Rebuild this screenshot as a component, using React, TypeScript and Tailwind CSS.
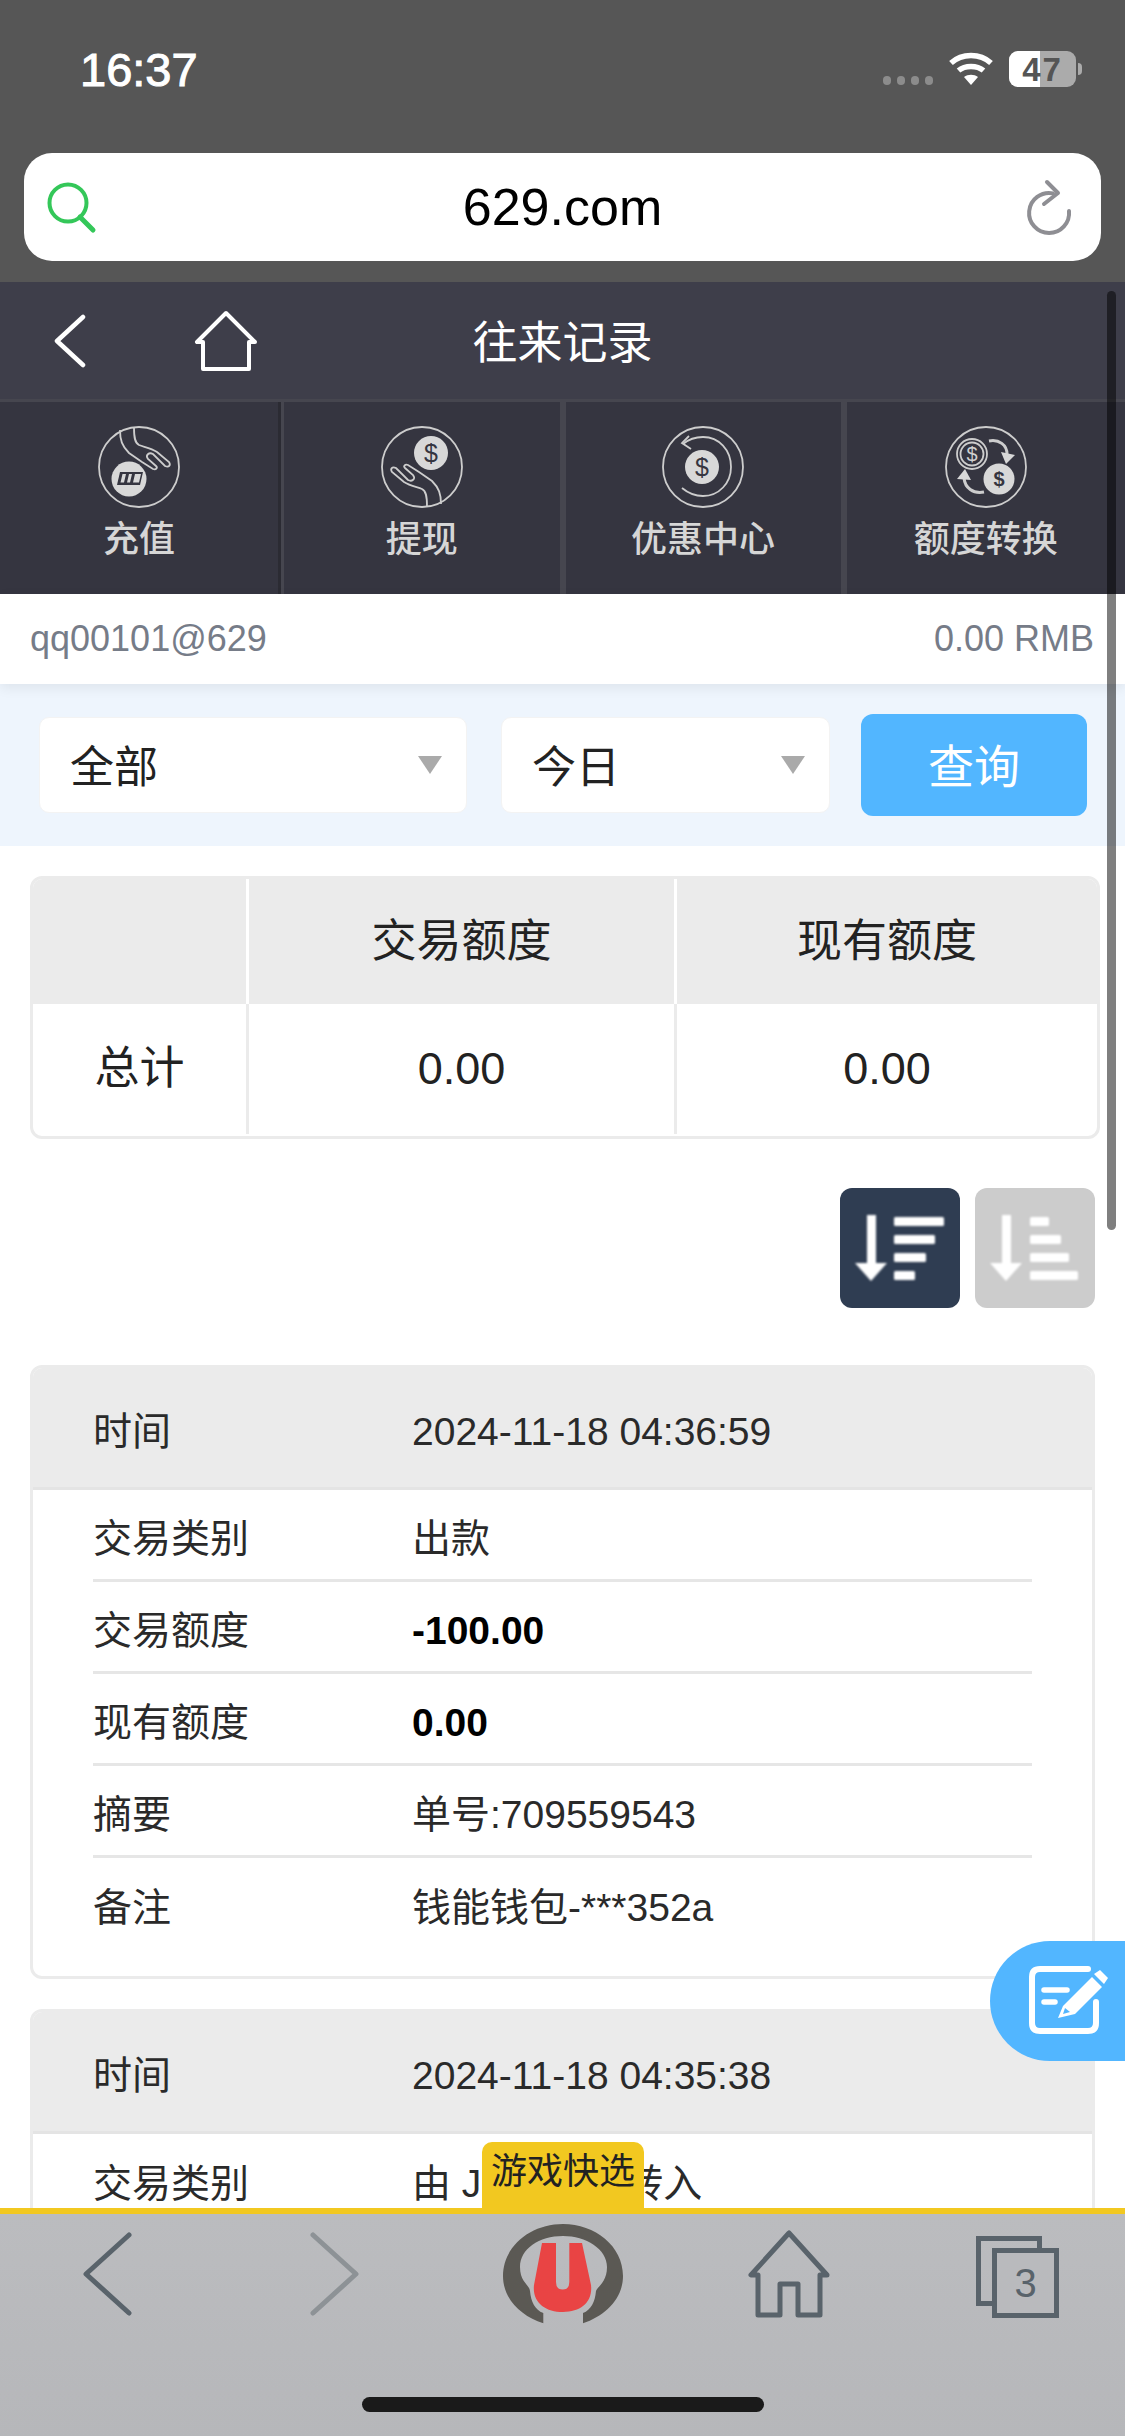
import React from 'react';

const IconRing = ({ children }: { children: React.ReactNode }) => (
  <svg width="82" height="82" viewBox="0 0 82 82" fill="none" stroke="#cdcdcd" strokeWidth="1.8">
    <circle cx="41" cy="41" r="40" />
    {children}
  </svg>
);

const handPath = (
  <path d="M22 4 C22 14 24 20 31 27 L44 36 L55 43 C58 44 60 42 58 40 L50 33 C47 29 51 26 55 28 L67 40 C71 42 73 39 71 36 L59 26 C53 22 46 21 41 19 C37 17 36 12 36 2" />
);

const DepositIcon = () => (
  <IconRing>
    {handPath}
    <circle cx="31" cy="53" r="17.5" fill="#d8d8d8" stroke="none" />
    <path d="M22 46 H45 L42 59 H19 Z" fill="#353540" stroke="none" />
    <path d="M24.5 48 H28 L26 56.5 H22.5 Z M31 48 H34 L32 56.5 H29 Z M37 48 H43 L41 56.5 H35 Z" fill="#d8d8d8" stroke="none" />
  </IconRing>
);

const WithdrawIcon = () => (
  <IconRing>
    <g transform="rotate(180 41 41)">{handPath}</g>
    <circle cx="50" cy="27" r="17" fill="#d8d8d8" stroke="none" />
    <text x="50" y="36" textAnchor="middle" fontSize="25" fill="#353540" stroke="none" fontFamily="Liberation Sans">$</text>
  </IconRing>
);

const PromoIcon = () => (
  <IconRing>
    <path d="M21 18 C27 13 33 11 41 11 C57 11 69 24 69 41 C69 57 57 70 41 70 C33 70 26 67 20 62" />
    <path d="M27 10 L20 17 L29 23" />
    <circle cx="40" cy="41" r="17" fill="#d8d8d8" stroke="none" />
    <text x="40" y="50" textAnchor="middle" fontSize="25" fill="#353540" stroke="none" fontFamily="Liberation Sans">$</text>
  </IconRing>
);

const TransferIcon = () => (
  <IconRing>
    <circle cx="27" cy="28" r="15" />
    <circle cx="27" cy="28" r="11.5" />
    <text x="27" y="35" textAnchor="middle" fontSize="20" fill="#d0d0d0" stroke="none" fontFamily="Liberation Sans">$</text>
    <circle cx="54" cy="53" r="15.5" fill="#d8d8d8" stroke="none" />
    <text x="54" y="60" textAnchor="middle" fontSize="20" fontWeight="700" fill="#353540" stroke="none" fontFamily="Liberation Sans">$</text>
    <path d="M44 15 C54 13 62 19 62 28" strokeWidth="3" />
    <path d="M56 26 L70 29 L61 38 Z" fill="#d8d8d8" stroke="none" />
    <path d="M39 66 C28 68 20 62 19 52" strokeWidth="3" />
    <path d="M12 53 L20 43 L26 54 Z" fill="#d8d8d8" stroke="none" />
  </IconRing>
);

const tabs = [
  { label: '充值', icon: <DepositIcon /> },
  { label: '提现', icon: <WithdrawIcon /> },
  { label: '优惠中心', icon: <PromoIcon /> },
  { label: '额度转换', icon: <TransferIcon /> },
];

const StatusBar = () => (
  <div className="h-[138px] flex items-center justify-between pl-[80px] pr-[43px]">
    <span className="text-[47px] text-white leading-none [-webkit-text-stroke:1px_white]">16:37</span>
    <div className="flex items-center">
      <div className="flex gap-[6px] mt-[23px] mr-[15px]">
        <span className="w-[8px] h-[9px] rounded-full bg-[#8c8c8c]" />
        <span className="w-[8px] h-[9px] rounded-full bg-[#8c8c8c]" />
        <span className="w-[8px] h-[9px] rounded-full bg-[#8c8c8c]" />
        <span className="w-[8px] h-[9px] rounded-full bg-[#8c8c8c]" />
      </div>
      <svg width="46" height="34" viewBox="0 0 46 34" fill="none" stroke="white" strokeWidth="5.5" className="mr-[15px]">
        <path d="M3 11 C14 1 32 1 43 11" />
        <path d="M10.5 18.5 C17 13 29 13 35.5 18.5" />
        <path d="M23 33 L16 25 C20 22 26 22 30 25 Z" fill="white" stroke="none" />
      </svg>
      <div className="relative w-[67px] h-[36px] rounded-[9px] bg-[#ababab] overflow-hidden">
        <div className="w-[31px] h-full bg-white" />
        <span className="absolute inset-0 flex items-center justify-center text-[33px] font-bold tracking-[2px] text-[#555] leading-none">47</span>
      </div>
      <div className="w-[4px] h-[12px] ml-[2px] rounded-r-full bg-[#ababab]" />
    </div>
  </div>
);

const UrlBar = () => (
  <div className="mt-[15px] mx-[24px] h-[108px] rounded-[28px] bg-white flex items-center justify-between px-[16px]">
    <svg width="60" height="60" viewBox="0 0 60 60" fill="none" stroke="#34c759" strokeWidth="4" strokeLinecap="round">
      <circle cx="28" cy="26" r="18.5" />
      <path d="M40 40 L53 53" strokeWidth="5" />
    </svg>
    <span className="text-[52px] text-black leading-none">629.com</span>
    <svg width="60" height="60" viewBox="0 0 60 60" fill="none" stroke="#8e8e93" strokeWidth="4" strokeLinecap="round" strokeLinejoin="round">
      <path d="M28 16.4 A20 20 0 1 0 44 34" />
      <path d="M22 5 L33 16 L19 27" />
    </svg>
  </div>
);

const PageHeader = () => (
  <div className="h-[120px] bg-[#3e3e4a] border-b-[3px] border-[#46464f] flex items-center text-white">
    <div className="w-[300px] flex items-center pl-[54px]">
      <svg width="32" height="54" viewBox="0 0 32 54" fill="none" stroke="white" strokeWidth="4.5" strokeLinecap="round" strokeLinejoin="round">
        <path d="M29 3 L3 27 L29 51" />
      </svg>
      <svg width="64" height="62" viewBox="0 0 64 62" fill="none" stroke="white" strokeWidth="4" strokeLinejoin="round" className="ml-[108px]">
        <path d="M32 3 L3 32 H9 V59 H55 V32 H61 Z" />
      </svg>
    </div>
    <div className="flex-1 pt-[5px] text-center text-[45px] leading-none">往来记录</div>
    <div className="w-[300px]" />
  </div>
);

const QuickTabs = () => (
  <div className="h-[192px] bg-[#353540] grid grid-cols-4">
    {tabs.map((tab, i) => (
      <div
        key={tab.label}
        className={`flex flex-col items-center pt-[24px] ${i < 3 ? 'border-r-[3px] border-[#2b2b33]' : ''} ${i > 0 ? 'border-l-[3px] border-[#46464f]' : ''}`}
      >
        {tab.icon}
        <span className="mt-[10px] text-[36px] leading-[44px] font-medium text-[#d6d6d6]">{tab.label}</span>
      </div>
    ))}
  </div>
);

const AccountRow = () => (
  <div className="relative h-[90px] bg-white flex items-center justify-between pl-[30px] pr-[31px] text-[36px] text-[#767c88] shadow-[0_4px_12px_rgba(0,0,0,0.07)]">
    <span>qq00101@629</span>
    <span>0.00 RMB</span>
  </div>
);

const SelectBox = ({ label, width }: { label: string; width: string }) => (
  <div className={`${width} h-[96px] rounded-[10px] bg-white border border-[#f3f3f3] flex items-center justify-between pl-[30px] pr-[24px]`}>
    <span className="pt-[5px] text-[44px] text-[#222] leading-none">{label}</span>
    <svg width="24" height="18" viewBox="0 0 24 18">
      <path d="M0 0 H24 L12 18 Z" fill="#aaaaaa" />
    </svg>
  </div>
);

const FilterBar = () => (
  <div className="h-[162px] bg-[#eef5fd] flex items-center pl-[39px]">
    <SelectBox label="全部" width="w-[428px]" />
    <div className="w-[34px]" />
    <SelectBox label="今日" width="w-[329px]" />
    <button className="ml-[31px] w-[226px] h-[102px] pt-[4px] rounded-[12px] bg-[#52b6ff] text-white text-[46px]">查询</button>
  </div>
);

const SummaryTable = () => (
  <div className="mt-[30px] ml-[30px] w-[1070px] h-[263px] rounded-[12px] border-[3px] border-[#ebebeb] overflow-hidden text-[45px] text-[#222]">
    <div className="h-[125px] bg-[#ebebeb] grid grid-cols-[216px_428px_1fr]">
      <div className="border-r-[3px] border-white" />
      <div className="border-r-[3px] border-white flex items-center justify-center">交易额度</div>
      <div className="flex items-center justify-center">现有额度</div>
    </div>
    <div className="h-[132px] pb-[2px] grid grid-cols-[216px_428px_1fr]">
      <div className="border-r-[3px] border-[#ebebeb] flex items-center justify-center">总计</div>
      <div className="border-r-[3px] border-[#ebebeb] flex items-center justify-center">0.00</div>
      <div className="flex items-center justify-center">0.00</div>
    </div>
  </div>
);

const SortButtons = () => (
  <div className="mt-[49px] pr-[30px] flex justify-end gap-[15px]">
    <svg width="120" height="120" viewBox="0 0 120 120" className="rounded-[12px] bg-[#2f3d52]" fill="white">
      <g className="blur-[0.8px]">
        <rect x="27" y="27" width="9" height="50" />
        <path d="M15 75 H47 L31 93 Z" />
        <rect x="54" y="29" width="50" height="9" rx="1.5" />
        <rect x="54" y="47" width="41" height="9" rx="1.5" />
        <rect x="54" y="65" width="32" height="9" rx="1.5" />
        <rect x="54" y="83" width="21" height="9" rx="1.5" />
      </g>
    </svg>
    <svg width="120" height="120" viewBox="0 0 120 120" className="rounded-[12px] bg-[#cccccc]" fill="white">
      <g className="blur-[0.8px]">
        <rect x="27" y="27" width="9" height="50" />
        <path d="M15 75 H47 L31 93 Z" />
        <rect x="55" y="29" width="19" height="9" rx="1.5" />
        <rect x="55" y="47" width="31" height="9" rx="1.5" />
        <rect x="55" y="65" width="39" height="9" rx="1.5" />
        <rect x="55" y="83" width="48" height="9" rx="1.5" />
      </g>
    </svg>
  </div>
);

type Row = { label: string; value: string; bold?: boolean };

const RecordCard = ({ time, rows }: { time: string; rows: Row[] }) => (
  <div className="ml-[30px] w-[1065px] rounded-[12px] border-[3px] border-[#ebebeb] text-[39px] text-[#2a2a2a] overflow-hidden">
    <div className="h-[122px] pt-[9px] bg-[#ebebeb] border-b-[3px] border-[#e4e4e4] flex items-center pl-[60px]">
      <span className="w-[319px]">时间</span>
      <span>{time}</span>
    </div>
    <div className="pl-[60px] pr-[60px] pb-[26px]">
      {rows.map((row, i) => (
        <div key={row.label} className={`h-[92px] pt-[9px] flex items-center ${i < rows.length - 1 ? 'border-b-[3px] border-[#e6e6e6]' : ''}`}>
          <span className="w-[319px]">{row.label}</span>
          <span className={row.bold ? 'font-bold text-black' : ''}>{row.value}</span>
        </div>
      ))}
    </div>
  </div>
);

const BottomBar = () => (
  <div className="h-[228px] border-t-[6px] border-[#f2c820] bg-gradient-to-b from-[#bbbcbf] to-[#b6b7ba]">
    <div className="flex h-[125px] pt-[18px] pl-[83px] items-start">
      <svg width="50" height="84" viewBox="0 0 50 84" fill="none" stroke="#59636b" strokeWidth="5" strokeLinecap="round" strokeLinejoin="round">
        <path d="M46 3 L3 42 L46 81" />
      </svg>
      <svg width="50" height="84" viewBox="0 0 50 84" fill="none" stroke="#8d9296" strokeWidth="5" strokeLinecap="round" strokeLinejoin="round" className="ml-[176px]">
        <path d="M4 3 L47 42 L4 81" />
      </svg>
      <svg width="124" height="100" viewBox="0 0 124 100" className="ml-[142px] mt-[-8px]">
        <path fill="#5b5954" d="M42.3 99.3 C20 92 2 75 2 52 C2 22 30 0 62 0 C94 0 122 22 122 52 C122 75 104 92 82 99.3 V89 C90 86 94 78 95 67 C97 62 106 58 106 43 C106 25 85 12 62 12 C38 12 19 25 19 43 C19 58 28 60 29 67 C30 78 34 86 42.3 89 Z" />
        <path fill="#e94444" d="M41 19 H55 V58 Q55 65.5 61.7 65.5 Q68.3 65.5 68.3 58 V19 H81 L90 61 C92 78 80 88 62 88 C44 88 31 78 33 61 Z" />
      </svg>
      <svg width="88" height="88" viewBox="0 0 88 88" fill="none" stroke="#59636b" strokeWidth="5" strokeLinejoin="round" className="ml-[120px] mt-[-2px]">
        <path d="M44 3 L6 45 H13 V85 H35 V54 H53 V85 H75 V45 H82 Z" />
      </svg>
      <div className="relative ml-[143px] mt-[4px] w-[84px] h-[84px]">
        <div className="absolute left-0 top-0 w-[66px] h-[70px] border-[5px] border-[#59636b]" />
        <div className="absolute left-[16px] top-[12px] w-[67px] h-[70px] border-[5px] border-[#59636b] bg-[#b9babd] flex items-center justify-center text-[40px] text-[#59636b]">3</div>
      </div>
    </div>
    <div className="mt-[58px] mx-auto w-[402px] h-[15px] rounded-full bg-[#1a1a1a]" />
  </div>
);

export default function App() {
  return (
    <div className="relative w-[1125px] h-[2436px] overflow-hidden bg-white flex flex-col font-['Liberation_Sans','Noto_Sans_CJK_SC',sans-serif]">
      <div className="h-[282px] shrink-0 bg-[#565656]">
        <StatusBar />
        <UrlBar />
      </div>

      <div className="relative flex-1 overflow-hidden">
        <PageHeader />
        <QuickTabs />
        <AccountRow />
        <FilterBar />
        <SummaryTable />
        <SortButtons />
        <div className="mt-[57px] flex flex-col gap-[30px]">
          <RecordCard
            time="2024-11-18 04:36:59"
            rows={[
              { label: '交易类别', value: '出款' },
              { label: '交易额度', value: '-100.00', bold: true },
              { label: '现有额度', value: '0.00', bold: true },
              { label: '摘要', value: '单号:709559543' },
              { label: '备注', value: '钱能钱包-***352a' },
            ]}
          />
          <RecordCard
            time="2024-11-18 04:35:38"
            rows={[{ label: '交易类别', value: '由 JDB棋牌 转入' }]}
          />
        </div>

        {/* scrollbar */}
        <div className="absolute top-[9px] right-[9px] w-[9px] h-[939px] rounded-full bg-black/50" />

        {/* floating note button */}
        <div className="absolute top-[1659px] right-0 w-[135px] h-[120px] rounded-l-[60px] bg-[#52b6ff] pl-[35px] pt-[19px]">
          <svg width="90" height="80" viewBox="0 0 90 80" fill="none" stroke="white" strokeLinecap="round">
            <path d="M63 9 H15 Q7 9 7 17 V63 Q7 71 15 71 H63 Q71 71 71 63 V42" strokeWidth="6" />
            <path d="M19 30 H42" strokeWidth="5.5" />
            <path d="M19 42 H30" strokeWidth="5.5" />
            <path d="M33 58 L38 46 L67 17 L77 27 L50 54 Z M69 14 L75 10 L83 18 L79 24 Z" fill="white" stroke="none" />
            <path d="M38 54 L40 48 L45 52 Z" fill="#52b6ff" stroke="none" />
          </svg>
        </div>

        {/* game quick pick tab */}
        <div className="absolute bottom-0 left-[482px] w-[162px] h-[66px] rounded-t-[10px] bg-[#f2c820] text-center text-[36px] leading-[60px] text-[#222]">游戏快选</div>
      </div>

      <BottomBar />
    </div>
  );
}
